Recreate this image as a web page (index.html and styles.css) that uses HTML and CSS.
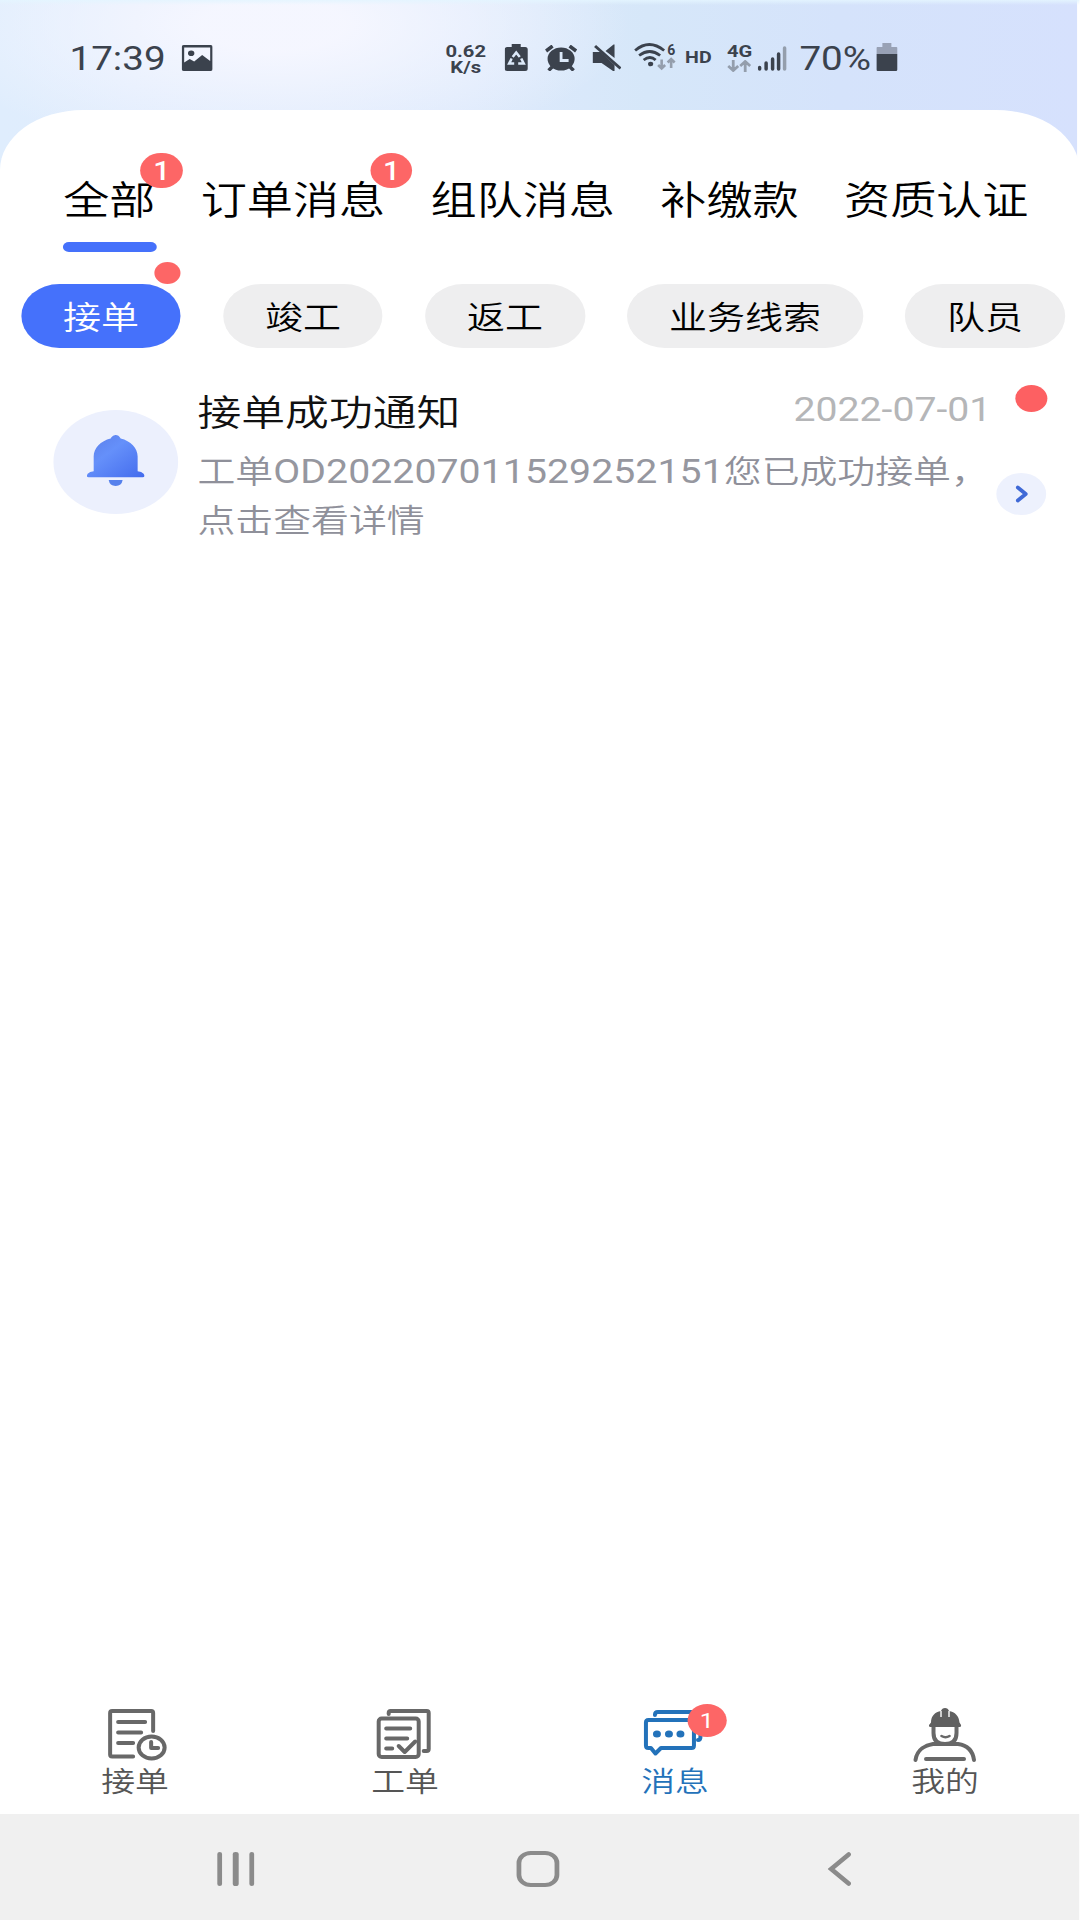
FILE: index.html
```html
<!DOCTYPE html>
<html lang="zh-CN">
<head>
<meta charset="utf-8">
<title>消息</title>
<link rel="stylesheet" href="styles.css">
</head>
<body>
<div class="screen">
  <header class="status">
    <span class="time">17:39</span>
    <svg class="ic photo" viewBox="0 0 31 26" preserveAspectRatio="none"><path fill-rule="evenodd" d="M2 0h27a2 2 0 0 1 2 2v22a2 2 0 0 1-2 2H2a2 2 0 0 1-2-2V2a2 2 0 0 1 2-2zM2.500 2.500v15l5.500-3.500 4.500 2.500 8-6.500 8 6V2.500zM9.500 5.500a3.200 2.800 0 1 1 0 5.600 3.200 2.800 0 1 1 0-5.600z"/></svg>
    <span class="speed"><span>0.62</span><span>K/s</span></span>
    <svg class="ic recycle" viewBox="0 0 23 27" preserveAspectRatio="none"><path d="M7 0h9v3h4.500A2.500 2.500 0 0 1 23 5.500v19a2.500 2.500 0 0 1-2.500 2.500h-18A2.500 2.500 0 0 1 0 24.500v-19A2.500 2.500 0 0 1 2.500 3H7z"/><g fill="none" stroke="#dce9f9" stroke-width="2.600"><path d="M8 13l3.500-4.500 3.500 4.500M16.500 14.500l2.500 5h-5.500M9.500 19.500H4.500l2.500-5"/></g><path d="M11.500 11.500l4 4h-3v5.500h-2v-5.500h-3z"/></svg>
    <svg class="ic alarm" viewBox="0 0 32 26" preserveAspectRatio="none"><ellipse cx="16" cy="14" rx="13.500" ry="11.500"/><path fill="none" stroke="#3b424d" stroke-width="3.500" d="M1 6l6.500-5M31 6l-6.500-5M7 22l-3.500 3.500M25 22l3.500 3.500"/><path fill="none" stroke="#dce9f9" stroke-width="2.800" d="M16 7v8.500h7.500"/></svg>
    <svg class="ic mute" viewBox="0 0 29 27" preserveAspectRatio="none"><path d="M0 8h8l14 13v6h-1.500L9 19H0zM13 7l8-6.500h1V14z"/><path fill="none" stroke="#3b424d" stroke-width="3" d="M2.500 2L28 24.500"/></svg>
    <svg class="ic wifi" viewBox="0 0 42 28" preserveAspectRatio="none"><g fill="none" stroke="#3b424d" stroke-width="2.800"><path d="M1 7.500Q15-4.500 30 7.500M5 12.500q10.500-8 21 0M9.500 17q6.500-5 12 0"/></g><ellipse cx="16.500" cy="21" rx="2.600" ry="2.300"/><g fill="none" stroke="#949eac" stroke-width="2.600"><path d="M27.500 16.500V26m-3.500-4l3.500 3.500 3.500-3.500M37 25V15.500m-3.500 4l3.500-3.500 3.500 3.500"/></g><text x="33" y="12" class="wifi-gen">6</text></svg>
    <span class="hd">HD</span>
    <span class="cell"><span>4G</span><svg class="arrows" viewBox="0 0 25 12" preserveAspectRatio="none"><path fill="none" stroke="#949eac" stroke-width="2.800" d="M6.500 0v10.500M1.500 6l5 4.500 5-4.500M18.500 12V1.500M13.500 6l5-4.500 5 4.500"/></svg></span>
    <svg class="ic signal" viewBox="0 0 29 25" preserveAspectRatio="none"><g fill="none" stroke="#3b424d" stroke-width="3.500" stroke-linecap="round"><path d="M2 21.500v1.500M8.500 17v6M15 13v10M21 8v15"/><path stroke="#949eac" d="M27 2v21"/></g></svg>
    <span class="percent">70%</span>
    <svg class="ic battery" viewBox="0 0 21 28" preserveAspectRatio="none"><path fill="#98a1b5" d="M6 0h9v4h5q1 0 1 1v6H0V5q0-1 1-1h5z"/><path d="M0 11h21v15.500a1.500 1.500 0 0 1-1.500 1.500h-18A1.500 1.500 0 0 1 0 26.500z"/></svg>
  </header>

  <main class="panel">
    <nav class="tabs">
      <a class="tab active">全部<i class="count">1</i></a>
      <a class="tab">订单消息<i class="count">1</i></a>
      <a class="tab">组队消息</a>
      <a class="tab">补缴款</a>
      <a class="tab">资质认证</a>
    </nav>
    <div class="filters">
      <a class="pill on">接单<i class="dot"></i></a>
      <a class="pill">竣工</a>
      <a class="pill">返工</a>
      <a class="pill">业务线索</a>
      <a class="pill">队员</a>
    </div>
    <article class="notice">
      <div class="avatar">
        <svg viewBox="0 0 58 52" preserveAspectRatio="none"><defs><linearGradient id="bell" x1="0" y1="0" x2="1" y2="1"><stop offset="0" stop-color="#5a7de8"/><stop offset=".4" stop-color="#6590fa"/><stop offset="1" stop-color="#436bed"/></linearGradient></defs><path fill="url(#bell)" d="M29 0q3 0 5 3.500C44 6 51 13 51 22v15q4 .5 6 2.500 2 3.500-1 3.500H2q-3 0-1-3.500Q3 37.500 7 37V22C7 13 14 6 24 3.500 26 0 29 0 29 0z"/><path fill="#5681ec" d="M22 46h14q-1 6-7 6t-7-6z"/></svg>
      </div>
      <div class="body">
        <div class="head"><h2>接单成功通知</h2><time>2022-07-01</time></div>
        <p>工单<span class="no">OD202207011529252151</span>您已成功接单，<br>点击查看详情</p>
      </div>
      <div class="side">
        <i class="mark"></i>
        <span class="go"><svg viewBox="0 0 13 18" preserveAspectRatio="none"><path fill="none" stroke="#3f69d6" stroke-width="3.800" stroke-linecap="round" stroke-linejoin="round" d="M2.500 2.500L10.500 9l-8 6.500"/></svg></span>
      </div>
    </article>
  </main>

  <footer class="menu">
    <a class="item"><svg viewBox="0 0 66 56" preserveAspectRatio="none"><g fill="none" stroke="#686868" stroke-width="4" stroke-linecap="round" stroke-linejoin="round"><path d="M31 48.500H10q-2 0-2-2V5q0-2 2-2h39q2 0 2 2v18"/><path d="M16 14h27M16 24.500h23M16 35h15"/><ellipse cx="49.500" cy="39.500" rx="13" ry="11"/><path d="M49 34v6h7"/></g></svg>接单</a>
    <a class="item"><svg viewBox="0 0 66 56" preserveAspectRatio="none"><g fill="none" stroke="#686868" stroke-width="4" stroke-linecap="round" stroke-linejoin="round"><rect x="7" y="10.500" width="40" height="38.500" rx="3"/><path d="M17 6V5q0-2 2-2h36q2 0 2 2v36q0 2-2 2h-3M14.500 20.500h24M14.500 30.500h21M14.500 40.500h6" /><path d="M27 38l6 6 10.500-10.500"/></g></svg>工单</a>
    <a class="item current"><svg viewBox="0 0 66 56" preserveAspectRatio="none"><g fill="none" stroke="#2372ba" stroke-width="4" stroke-linecap="round" stroke-linejoin="round"><path d="M12.500 7q0-3 3-3H55q3 0 3 3v22q0 3-2.500 3"/><path d="M6 12h43q2.500 0 2.500 2.500v23q0 2.500-2.500 2.500H18.500L13 45.500 8.500 40H6q-2.500 0-2.500-2.500v-23Q3.500 12 6 12z"/></g><g fill="#2372ba"><ellipse cx="14.500" cy="26" rx="4" ry="3.600"/><ellipse cx="26.500" cy="26" rx="4" ry="3.600"/><ellipse cx="38" cy="26" rx="4" ry="3.600"/></g></svg>消息<i class="count small">1</i></a>
    <a class="item"><svg viewBox="0 0 66 56" preserveAspectRatio="none"><g fill="none" stroke="#686868" stroke-width="4" stroke-linecap="round" stroke-linejoin="round"><path d="M21.500 19v6q0 11 11.500 11t11.500-11v-6"/><path d="M3.500 52C5 41 14 37 21 36h25c7 1 14.500 5 16 16M14 51h38"/><path stroke-width="2.600" d="M29.500 28q4 2.500 8 0"/></g><path fill="#606060" d="M17 17l2-2.500C19 8 23 4 29 3q1-3 4-3t4 3c6 1 10 5 10.500 11.500L49 17q.5 2-2 2H19q-2.500 0-2-2z"/><path fill="none" stroke="#fff" stroke-width="1.400" d="M29 3v6M37 3v6"/></svg>我的</a>
  </footer>

  <div class="keys">
    <span class="recents"><i></i><i></i><i></i></span>
    <span class="home"></span>
    <svg class="back" viewBox="0 0 24 34" preserveAspectRatio="none"><path fill="none" stroke="#8b8b8b" stroke-width="4.600" stroke-linecap="round" d="M21 2.500L3.500 17 21 31.500"/></svg>
  </div>
</div>
</body>
</html>
```
FILE: styles.css
```css
* { box-sizing: border-box; }

html, body {
  margin: 0;
  width: 1080px;
  height: 1920px;
  overflow: hidden;
  background: #fff;
}

.screen {
  width: 909.474px;
  height: 1920px;
  transform: scaleX(1.1875);
  transform-origin: 0 0;
  display: flex;
  flex-direction: column;
  overflow: hidden;
  font-family: Roboto, "Noto Sans CJK SC", sans-serif;
  color: #000;
  background:
    linear-gradient(180deg, rgba(228, 245, 255, .9) 0, rgba(228, 245, 255, 0) 5px) 0 0 / 100% 180px no-repeat,
    radial-gradient(ellipse 300px 130px at 230px 25px, rgba(246, 247, 255, .95) 20%, rgba(246, 247, 255, 0) 100%) 0 0 / 907px 180px no-repeat,
    linear-gradient(90deg, #dfedfd 0%, #e0ecfd 12%, #deeafc 44%, #d6e7f9 60%, #d5e3fb 78%, #d6e1fd 100%) 0 0 / 907px 180px no-repeat,
    #fff;
}

i { font-style: normal; }
svg { display: block; flex: none; }

.status {
  height: 110px;
  flex: none;
  display: flex;
  align-items: flex-start;
  padding: 0 0 0 58.500px;
  color: #3b424d;
  fill: #3b424d;
}
.time, .percent { font-size: 32.500px; line-height: 40px; margin-top: 39px; white-space: nowrap; }
.time { width: 89px; }
.photo { width: 26.100px; height: 26px; margin: 44.500px 0 0 5.800px; }
.speed {
  width: 43.800px;
  margin: 42.500px 0 0 190.900px;
  display: flex;
  flex-direction: column;
  text-align: center;
  font-weight: 700;
  font-size: 17px;
  line-height: 16.500px;
}
.recycle { width: 19.400px; height: 27px; margin: 44px 0 0 11.200px; }
.alarm { width: 27px; height: 26px; margin: 45px 0 0 14.300px; }
.mute { width: 24.400px; height: 27px; margin: 44px 0 0 13px; }
.wifi { width: 35.400px; height: 28px; margin: 43px 0 0 10.500px; overflow: visible; }
.wifi-gen { font: 700 14px Roboto, sans-serif; }
.hd { width: 24.400px; margin: 48px 0 0 6.700px; text-align: center; font-weight: 700; font-size: 16.500px; line-height: 20px; }
.cell { width: 21px; margin: 42.500px 0 0 11.800px; font-weight: 700; font-size: 17px; line-height: 17px; }
.arrows { width: 21px; height: 12px; margin-top: 0; }
.signal { width: 24.400px; height: 25px; margin: 46px 0 0 5.100px; }
.percent { width: 61.800px; margin-left: 10.600px; }
.battery { width: 17.700px; height: 28px; margin: 43px 0 0 3.400px; }

.panel {
  flex: 1;
  display: flex;
  flex-direction: column;
  background: #fff;
  border-radius: 70px 70px 0 0 / 60px 60px 0 0;
}

.tabs {
  display: flex;
  gap: 38.200px;
  padding: 60px 0 0 53.200px;
}
.tab {
  position: relative;
  font-size: 38.850px;
  font-weight: 350;
  line-height: 62px;
  height: 82px;
  white-space: nowrap;
}
.tab.active::after {
  content: "";
  position: absolute;
  left: -.2px;
  bottom: 0;
  width: 79.200px;
  height: 10px;
  border-radius: 5px;
  background: #4571fb;
}
.count {
  position: absolute;
  top: -17px;
  right: -23px;
  width: 35.400px;
  height: 35.400px;
  border-radius: 50%;
  background: #fd6666;
  color: #fff;
  font-size: 25px;
  font-weight: 500;
  line-height: 37px;
  text-align: center;
}

.filters {
  display: flex;
  gap: 35.400px;
  padding: 32px 0 0 17.700px;
}
.pill {
  position: relative;
  flex: none;
  height: 64px;
  padding: 0 35.350px;
  border-radius: 32px;
  background: #eeeeef;
  font-size: 32px;
  font-weight: 350;
  line-height: 68px;
}
.pill.on { background: #4571fb; color: #fff; }
.dot {
  position: absolute;
  top: -22px;
  right: 0;
  width: 22px;
  height: 22px;
  border-radius: 50%;
  background: #fd6666;
}

.notice {
  display: flex;
  padding: 36px 0 0 45.300px;
}
.avatar {
  width: 105px;
  height: 104px;
  margin-top: 25.500px;
  border-radius: 50%;
  background: #ecf0fd;
  display: flex;
  justify-content: center;
  padding-top: 25.500px;
}
.avatar svg { width: 48.800px; height: 51px; }
.body { width: 684.500px; padding-left: 16px; }
.head {
  display: flex;
  justify-content: space-between;
  height: 60px;
}
.head h2 { margin: 0; font-size: 36.900px; font-weight: 350; line-height: 60px; color: #111; }
.head time { font-size: 33px; line-height: 52px; color: #b5b6b8; }
.body p { margin: 2.500px 0 0; font-size: 31.900px; font-weight: 350; line-height: 49px; color: #8f909a; white-space: nowrap; }
.no { font-size: 33px; letter-spacing: .06px; font-weight: 400; color: #96979f; }
.side {
  margin-left: 4.700px;
  display: flex;
  flex-direction: column;
  align-items: center;
  width: 42px;
}
.mark { width: 27px; height: 27px; border-radius: 50%; background: #fd6062; margin: .5px 0 61px 16px; }
.go {
  width: 42px;
  height: 42px;
  border-radius: 50%;
  background: #edf1fd;
  display: grid;
  place-items: center;
}
.go svg { width: 10.900px; height: 18px; }

.menu {
  flex: none;
  height: 127px;
  display: grid;
  grid-template-columns: repeat(4, 1fr);
  background: #fff;
}
.item {
  position: relative;
  display: flex;
  flex-direction: column;
  align-items: center;
  padding-top: 21px;
  font-size: 28.500px;
  font-weight: 350;
  line-height: 38px;
  color: #555;
}
.item svg { width: 55.600px; height: 56px; }
.item.current { color: #2372ba; }
.count.small { top: 17px; right: auto; left: 124px; width: 33px; height: 33px; font-size: 21px; line-height: 34px; font-weight: 400; }

.keys {
  flex: none;
  height: 106px;
  background: #f0f0f0;
  display: flex;
  align-items: flex-start;
  padding: 37px 0 0 182.700px;
}
.recents { display: flex; gap: 8.800px; padding-top: 1px; }
.recents i { width: 4.700px; height: 34px; border-radius: 2.300px; background: #8b8b8b; }
.home { width: 35.400px; height: 35.500px; margin-left: 220.900px; border: 4.500px solid #8b8b8b; border-radius: 12px; }
.back { width: 20.200px; height: 34px; margin: 1px 0 0 226.500px; }
```
